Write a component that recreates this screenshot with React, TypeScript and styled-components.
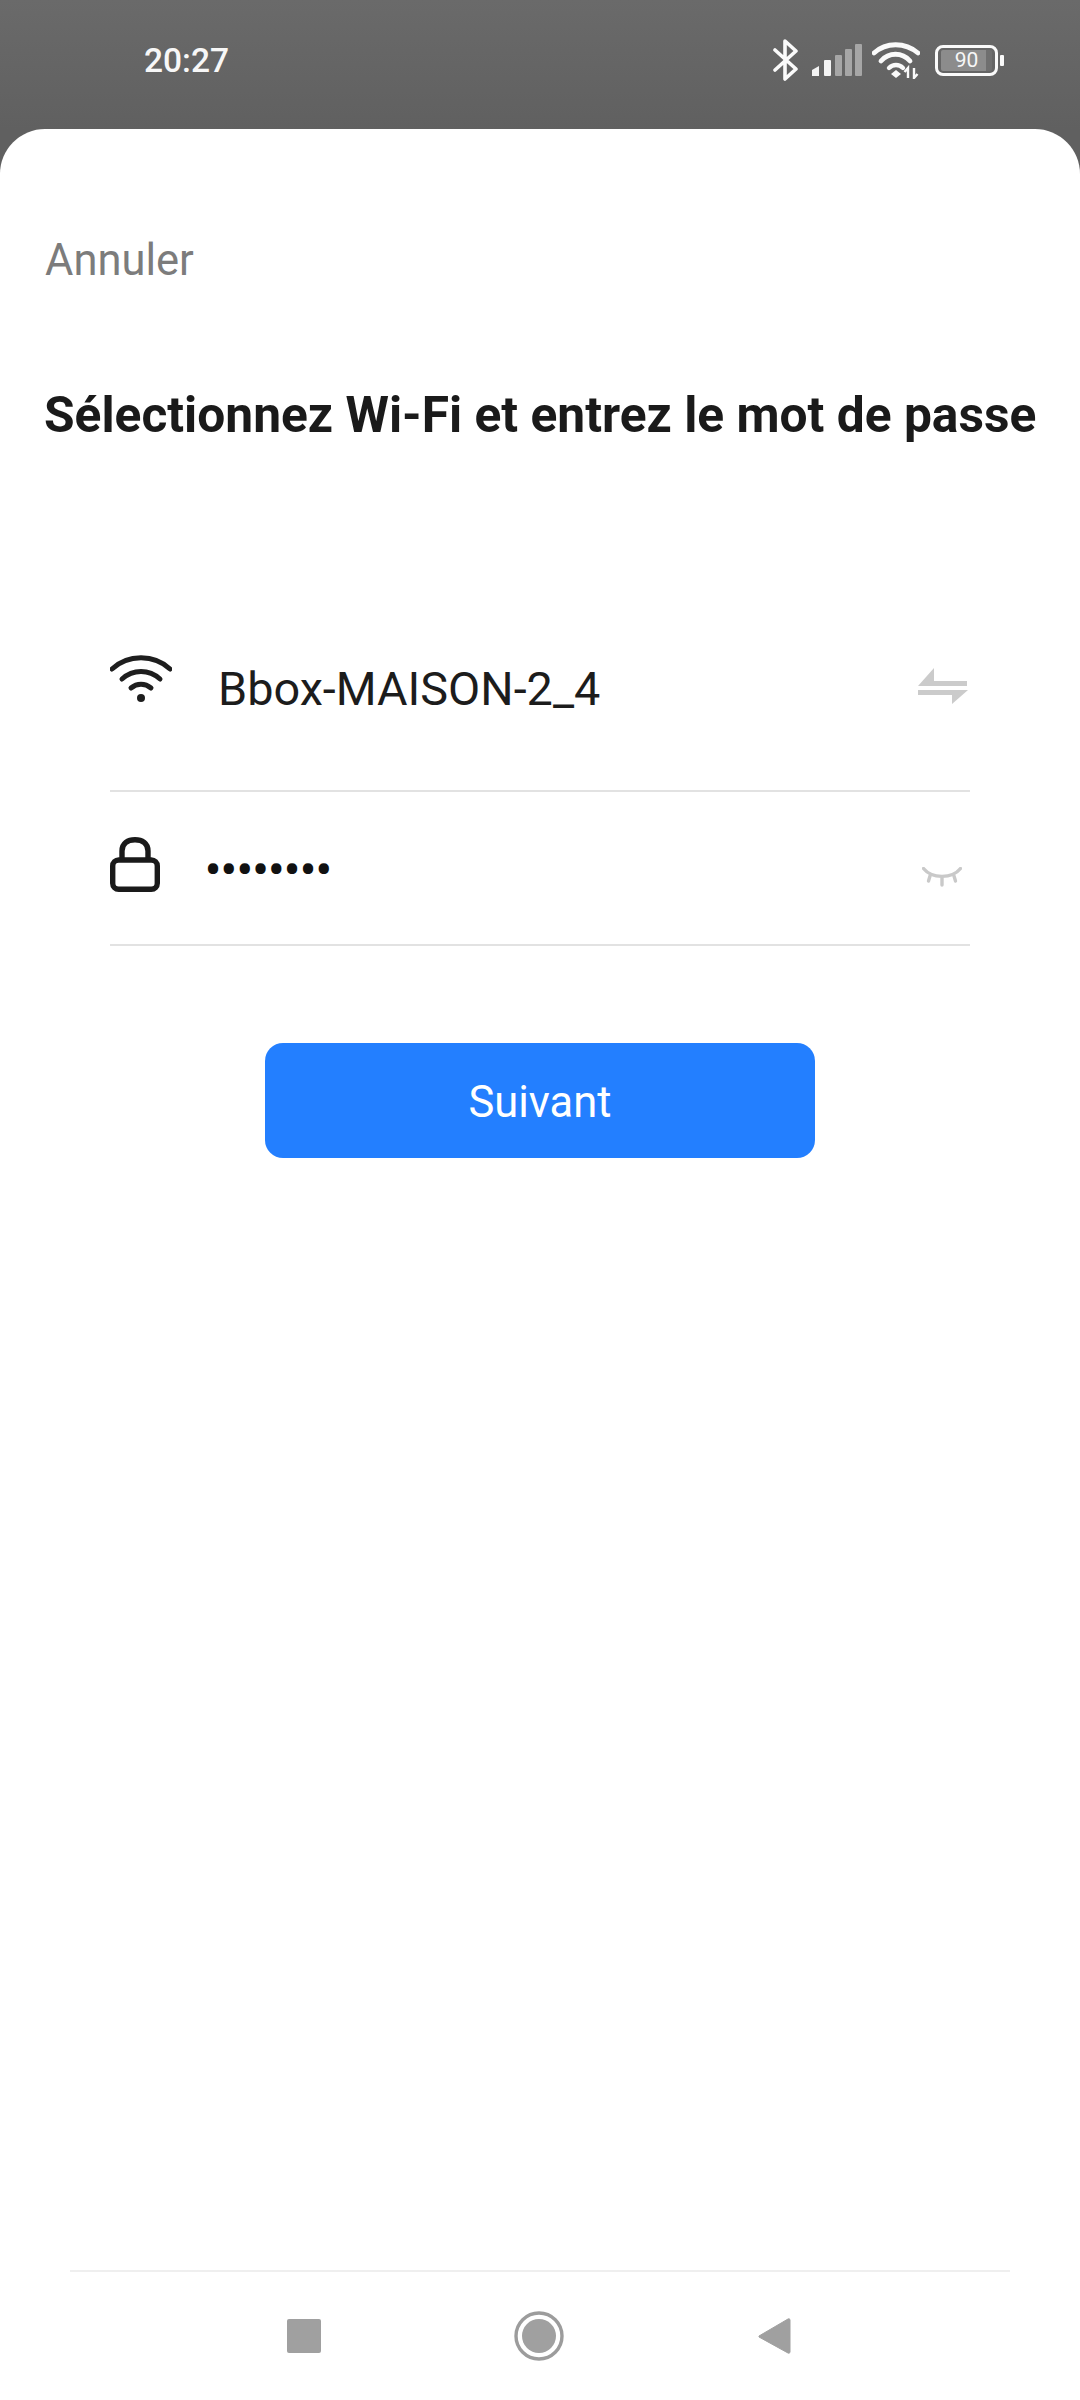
import React from 'react';
import styled, { createGlobalStyle } from 'styled-components';

const GlobalStyle = createGlobalStyle`
  html, body {
    margin: 0;
    padding: 0;
    background: #636363;
    font-family: Roboto, "Liberation Sans", sans-serif;
  }
`;

const Page = styled.div`
  width: 1080px;
  height: 2400px;
  display: flex;
  flex-direction: column;
  background: linear-gradient(#6a6a6a, #606060 129px);
  overflow: hidden;
`;

const StatusBar = styled.div`
  height: 129px;
  flex: none;
  box-sizing: border-box;
  padding: 0 76px 9px 144px;
  display: flex;
  align-items: center;
  justify-content: space-between;
`;

const Time = styled.span`
  color: #f7f7f7;
  font-size: 33.5px;
  font-weight: 500;
  line-height: 40px;
  margin-top: 2px;
`;

const StatusIcons = styled.div`
  display: flex;
  align-items: center;
  gap: 0;
`;

const Sheet = styled.main`
  flex: 1;
  display: flex;
  flex-direction: column;
  background: #fff;
  border-radius: 45px 45px 0 0;
`;

const Cancel = styled.div`
  margin: 107px 0 0 45px;
  color: #7c7c7c;
  font-size: 43.5px;
  line-height: 50px;
`;

const Title = styled.h1`
  margin: 102px 0 0 44px;
  color: #1a1a1a;
  font-size: 49.7px;
  font-weight: 700;
  line-height: 54px;
  white-space: nowrap;
`;

const Form = styled.div`
  margin: 0 110px;
  padding-top: 200px;
  display: flex;
  flex-direction: column;
`;

const Row = styled.div<{ $height: number; $lift?: number }>`
  height: ${(p) => p.$height}px;
  padding-bottom: ${(p) => p.$lift ?? 0}px;
  display: flex;
  align-items: center;
  justify-content: space-between;
  border-bottom: 2px solid #e2e2e2;
  box-sizing: border-box;
`;

const RowLeft = styled.div`
  display: flex;
  align-items: center;
`;

const NetworkName = styled.span`
  margin-left: 46px;
  color: #1c1c1c;
  font-size: 46.8px;
  line-height: 52px;
`;

const PasswordDots = styled.span`
  margin-left: 45px;
  margin-top: 4px;
  color: #111;
  font-size: 44px;
  font-weight: 700;
  line-height: 52px;
`;

const NextButton = styled.button`
  align-self: center;
  width: 550px;
  height: 115px;
  margin-top: 97px;
  border: 0;
  border-radius: 18px;
  background: #237fff;
  color: #fff;
  font-family: Roboto, "Liberation Sans", sans-serif;
  font-size: 43.5px;
  padding: 3px 0 0;
`;

const Spacer = styled.div`
  flex: 1;
`;

const NavBar = styled.nav`
  height: 130px;
  flex: none;
  margin: 0 70px;
  box-sizing: border-box;
  border-top: 2px solid #efefef;
  padding-right: 2px;
  display: flex;
  align-items: center;
  justify-content: center;
  gap: 193px;
`;

const Bluetooth = () => (
  <svg width="26" height="42" viewBox="0 0 26 42" fill="none" stroke="#fafafa" strokeWidth="3.6" strokeLinejoin="round" strokeLinecap="round">
    <path d="M2 11 L23 30 L12 40 V2 L23 12 L2 31" />
  </svg>
);

const Signal = () => (
  <svg width="52" height="34" viewBox="0 0 52 34" style={{ marginLeft: 11 }}>
    <path d="M2 27 L9 23 V33 H2 Z" fill="#f4f4f4" />
    <rect x="14" y="17" width="7" height="16" rx="1" fill="#f4f4f4" />
    <rect x="25" y="12" width="7" height="21" rx="1" fill="#a6a6a6" />
    <rect x="35" y="6" width="7" height="27" rx="1" fill="#a6a6a6" />
    <rect x="45" y="1" width="7" height="32" rx="1" fill="#a6a6a6" />
  </svg>
);

const StatusWifi = () => (
  <svg width="48" height="38" viewBox="0 0 48 38" fill="none" style={{ marginLeft: 10 }}>
    <path d="M2 12 C14 1 33 1 46 12" stroke="#fafafa" strokeWidth="4.8" strokeLinecap="round" />
    <path d="M9 20 C17 11 30 11 38 20" stroke="#fafafa" strokeWidth="4.8" strokeLinecap="round" />
    <path d="M17 27 C21 23 27 23 31 27" stroke="#fafafa" strokeWidth="4.4" strokeLinecap="round" />
    <path d="M19 33 L24 29 L29 33 L24 37 Z" fill="#fafafa" />
    <path d="M36 37 V27 L32.500 31 M42 27 V37 L45.500 33" stroke="#fafafa" strokeWidth="2.4" />
  </svg>
);

const BatteryBody = styled.div`
  width: 63px;
  height: 31px;
  margin-left: 15px;
  box-sizing: border-box;
  border: 3px solid #fafafa;
  border-radius: 8px;
  padding: 2px 3px;
  display: flex;
`;

const BatteryFill = styled.div`
  flex: 1;
  background: linear-gradient(90deg, #8c8c8c 88%, #6f6f6f 88%);
  border-radius: 2px;
  color: #f7f7f7;
  font-size: 21px;
  line-height: 21px;
  text-align: center;
`;

const BatteryNub = styled.div`
  width: 4px;
  height: 11px;
  margin-left: 2px;
  background: #fafafa;
  border-radius: 1px;
`;

const RowWifi = () => (
  <svg width="62" height="48" viewBox="0 0 62 48" fill="none" stroke="#1e1e1e" strokeLinecap="round" style={{ marginBottom: 20 }}>
    <path d="M2 14 C18 -1 44 -1 60 14" strokeWidth="5" />
    <path d="M12 24 C23 14 39 14 50 24" strokeWidth="5" />
    <path d="M21 33 C27 28 35 28 41 33" strokeWidth="5" />
    <circle cx="31" cy="43" r="4" fill="#1e1e1e" stroke="none" />
  </svg>
);

const Lock = () => (
  <svg width="50" height="55" viewBox="0 0 50 55" fill="none" stroke="#1a1a1a" strokeWidth="5.4" style={{ marginBottom: 7 }}>
    <rect x="2.700" y="23" width="44.600" height="29.300" rx="6" />
    <path d="M12 23 V14 C12 6 18 2.700 25 2.700 C32 2.700 38 6 38 14 V23" />
  </svg>
);

const Swap = () => (
  <svg width="50" height="36" viewBox="0 0 50 36" fill="#cbcbcb" style={{ marginBottom: 7, marginRight: 2 }}>
    <path d="M16 0 V13 H49 V18 H0 Z" />
    <path d="M0 22 H50 L34 36 V27 H0 Z" />
  </svg>
);

const Eye = () => (
  <svg width="40" height="20" viewBox="0 0 40 20" fill="none" stroke="#c9c9c9" strokeWidth="3.4" strokeLinecap="round" style={{ marginRight: 8, marginTop: 17 }}>
    <path d="M1.500 1.500 C10 12 30 12 38.500 1.500" />
    <path d="M8 9 L6.500 14 M20 11 V18 M32 9 L33.500 14" />
  </svg>
);

const Square = () => (
  <svg width="34" height="34" viewBox="0 0 34 34">
    <rect width="34" height="34" rx="2" fill="#a0a0a0" />
  </svg>
);

const HomeCircle = () => (
  <svg width="50" height="50" viewBox="0 0 50 50">
    <circle cx="25" cy="25" r="23" fill="none" stroke="#9c9c9c" strokeWidth="3.4" />
    <circle cx="25" cy="25" r="17" fill="#a0a0a0" />
  </svg>
);

const Back = () => (
  <svg width="34" height="38" viewBox="0 0 34 38">
    <path d="M2 19 L31 2 C32 1.500 33 2 33 3 V35 C33 36 32 36.500 31 36 L2 20 Z" fill="#a0a0a0" stroke="#a0a0a0" strokeLinejoin="round" />
  </svg>
);

const App: React.FC = () => {
  return (
    <Page>
      <GlobalStyle />
      <StatusBar>
        <Time>20:27</Time>
        <StatusIcons>
          <Bluetooth />
          <Signal />
          <StatusWifi />
          <BatteryBody>
            <BatteryFill>90</BatteryFill>
          </BatteryBody>
          <BatteryNub />
        </StatusIcons>
      </StatusBar>
      <Sheet>
        <Cancel>Annuler</Cancel>
        <Title>Sélectionnez Wi-Fi et entrez le mot de passe</Title>
        <Form>
          <Row $height={150} $lift={54}>
            <RowLeft>
              <RowWifi />
              <NetworkName>Bbox-MAISON-2_4</NetworkName>
            </RowLeft>
            <Swap />
          </Row>
          <Row $height={154}>
            <RowLeft>
              <Lock />
              <PasswordDots>••••••••</PasswordDots>
            </RowLeft>
            <Eye />
          </Row>
          <NextButton>Suivant</NextButton>
        </Form>
        <Spacer />
        <NavBar>
          <Square />
          <HomeCircle />
          <Back />
        </NavBar>
      </Sheet>
    </Page>
  );
};

export default App;
